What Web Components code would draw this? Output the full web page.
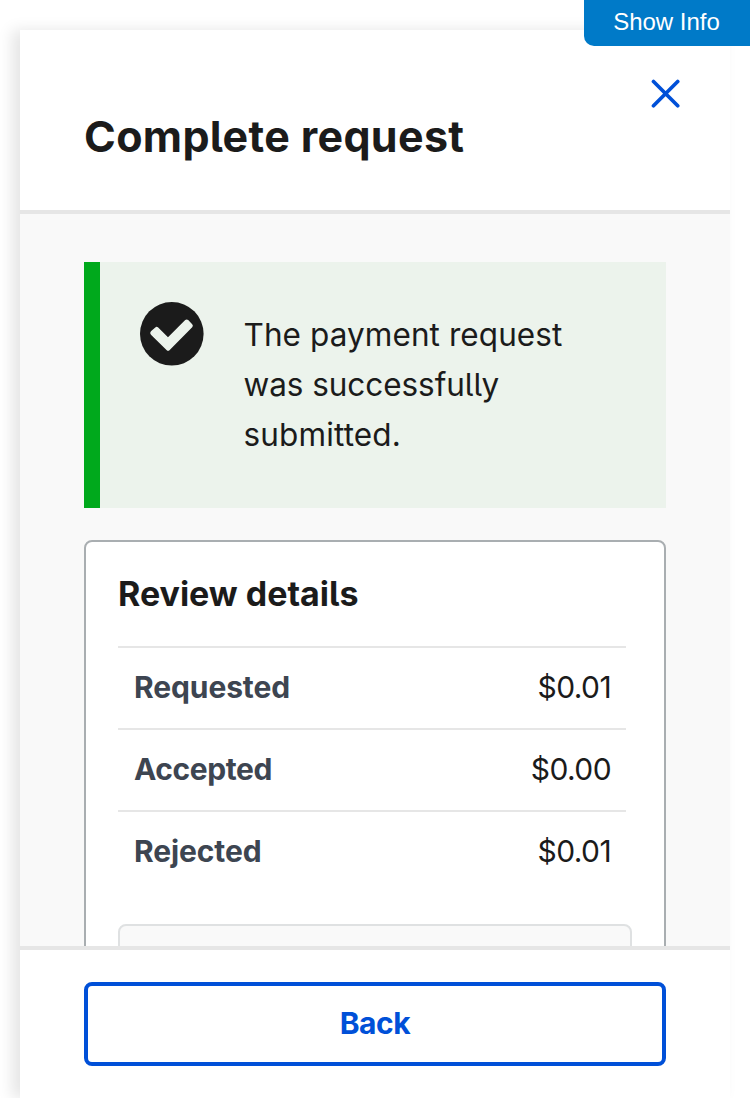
<!DOCTYPE html>
<html lang="en">
<head>
<meta charset="utf-8">
<title>Complete request</title>
<style>
html,body{margin:0;height:100%;overflow:hidden;background:#fff}
body{font-family:Inter,"Noto Sans",sans-serif;color:#1b1b1b;font-feature-settings:"cv05" 1}
</style>
</head>
<body>
<info-tab>Show Info</info-tab>
<request-modal>
  <span slot="title">Complete request</span>
  <success-alert>
    <span>The payment request</span>
    <span style="letter-spacing:-.06px">was successfully</span>
    <span style="letter-spacing:.15px">submitted.</span>
  </success-alert>
  <review-card heading="Review details">
    <detail-row label="Requested" value="$0.01"></detail-row>
    <detail-row label="Accepted" value="$0.00" style="--label-spacing:-.4px"></detail-row>
    <detail-row label="Rejected" value="$0.01"></detail-row>
  </review-card>
  <outline-button slot="footer">Back</outline-button>
</request-modal>
<script>
const define = (name, html, setup) => customElements.define(name, class extends HTMLElement {
  constructor() {
    super();
    this.attachShadow({mode: 'open'}).innerHTML = html;
  }
  connectedCallback() { if (setup) setup(this, this.shadowRoot); }
});

define('info-tab', `<style>
:host{position:absolute;z-index:2;top:0;right:0;box-sizing:border-box;width:166px;height:46px;padding-right:1px;background:#007ac8;color:#fff;border-radius:0 0 0 10px;font:24px/44px "Liberation Sans",Arial,sans-serif;text-align:center;white-space:nowrap}
</style><slot></slot>`);

define('close-icon', `<style>
:host{display:block;width:30px;height:30px}svg{display:block}
</style><svg width="30" height="30" viewBox="0 0 30 30" fill="none" stroke="#0050d8" stroke-width="3.7" stroke-linecap="round"><path d="M2.5 2.5L26.7 26.7M26.7 2.5L2.5 26.7"/></svg>`);

define('request-modal', `<style>
:host{display:flex;flex-direction:column;box-sizing:border-box;height:1068px;margin:30px 20px 0;background:#fff;box-shadow:-8px 0 14px rgba(0,0,0,.1)}
header{box-sizing:border-box;height:184px;flex:none;display:flex;justify-content:space-between;padding:49px 50px 0 64px;border-bottom:4px solid #e6e6e6}
h1{margin:29px 0 0;font-size:43px;line-height:56px;font-weight:700;letter-spacing:.33px;white-space:nowrap}
close-icon{margin-right:-1px}
main{flex:1;min-height:0;overflow:hidden;background:#f9f9f9;padding:48px 64px 0}
footer{box-sizing:border-box;height:152px;flex:none;border-top:4px solid #e6e6e6;padding:32px 64px}
</style>
<header><h1><slot name="title"></slot></h1><close-icon></close-icon></header>
<main><slot></slot></main>
<footer><slot name="footer"></slot></footer>`);

define('success-alert', `<style>
:host{display:flex;box-sizing:border-box;height:246px;background:#ecf3ec;border-left:16px solid #00a91c;padding:40px;margin-bottom:32px}
svg{flex:none;display:block;margin-right:39.5px}
p{margin:8px 0 0;font-size:31.5px;line-height:50px;letter-spacing:.08px;white-space:nowrap}
::slotted(span){display:block}
</style>
<svg width="64" height="64" viewBox="0 0 64 64"><circle cx="31.8" cy="31.8" r="31.8" fill="#1b1b1b"/><path d="M11.2 29.1L15.3 25.4Q16.8 24.2 18.2 25.6L28 35.2L45.2 18.1Q46.7 16.7 48.2 18.1L52.2 22.2Q53.6 23.7 52.2 25.2L29.7 48Q28.1 49.7 26.5 48L11.2 33Q9.3 31 11.2 29.1Z" fill="#ecf3ec"/></svg>
<p><slot></slot></p>`);

define('review-card', `<style>
:host{display:block;box-sizing:border-box;height:600px;background:#fff;border:2px solid #a9aeb1;border-radius:8px;padding:31px 32px}
h2{margin:0 0 31px;height:42px;font-size:34px;line-height:42px;font-weight:700;letter-spacing:-.02px;white-space:nowrap}
.rows{margin-right:6px}
.panel{margin-top:32px;height:200px;background:#f9f9f9;border:2px solid #dfe1e2;border-radius:8px}
</style><h2></h2><div class="rows"><slot></slot></div><div class="panel"></div>`,
(el, root) => { root.querySelector('h2').textContent = el.getAttribute('heading'); });

define('detail-row', `<style>
:host{display:flex;justify-content:space-between;align-items:center;box-sizing:border-box;height:82px;border-top:2px solid #e6e6e6;padding:0 15px 2px 16px;font-size:30px;line-height:40px;white-space:nowrap}
.l{font-weight:700;color:#3d4551;letter-spacing:var(--label-spacing,-.1px)}
.v{letter-spacing:-.6px}
</style><span class="l"></span><span class="v"></span>`,
(el, root) => {
  root.querySelector('.l').textContent = el.getAttribute('label');
  root.querySelector('.v').textContent = el.getAttribute('value');
});

define('outline-button', `<style>
:host{display:block}
button{display:block;box-sizing:border-box;width:100%;height:84px;margin:0;padding:0 0 2px;background:transparent;border:4px solid #0050d8;border-radius:8px;color:#0050d8;font:inherit;font-feature-settings:inherit;font-size:30px;font-weight:700;line-height:74px;letter-spacing:-.4px}
</style><button type="button"><slot></slot></button>`);
</script>
</body>
</html>
